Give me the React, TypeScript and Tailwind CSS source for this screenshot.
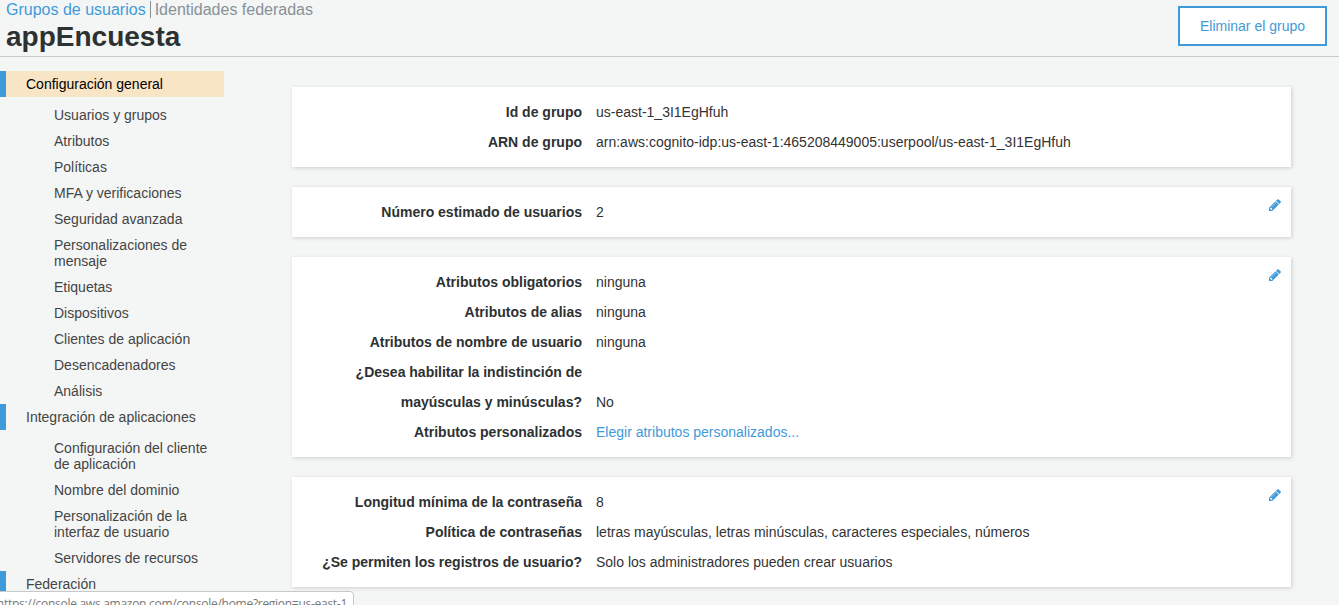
type NavGroup = { title: string; active?: boolean; items: string[] };
type Row = { label: string; value: string; link?: boolean };

const NAV: NavGroup[] = [
  {
    title: "Configuración general",
    active: true,
    items: [
      "Usuarios y grupos",
      "Atributos",
      "Políticas",
      "MFA y verificaciones",
      "Seguridad avanzada",
      "Personalizaciones de mensaje",
      "Etiquetas",
      "Dispositivos",
      "Clientes de aplicación",
      "Desencadenadores",
      "Análisis",
    ],
  },
  {
    title: "Integración de aplicaciones",
    items: [
      "Configuración del cliente de aplicación",
      "Nombre del dominio",
      "Personalización de la interfaz de usuario",
      "Servidores de recursos",
    ],
  },
  { title: "Federación", items: [] },
];

const CARDS: { editable: boolean; rows: Row[] }[] = [
  {
    editable: false,
    rows: [
      { label: "Id de grupo", value: "us-east-1_3I1EgHfuh" },
      { label: "ARN de grupo", value: "arn:aws:cognito-idp:us-east-1:465208449005:userpool/us-east-1_3I1EgHfuh" },
    ],
  },
  { editable: true, rows: [{ label: "Número estimado de usuarios", value: "2" }] },
  {
    editable: true,
    rows: [
      { label: "Atributos obligatorios", value: "ninguna" },
      { label: "Atributos de alias", value: "ninguna" },
      { label: "Atributos de nombre de usuario", value: "ninguna" },
      { label: "¿Desea habilitar la indistinción de mayúsculas y minúsculas?", value: "No" },
      { label: "Atributos personalizados", value: "Elegir atributos personalizados...", link: true },
    ],
  },
  {
    editable: true,
    rows: [
      { label: "Longitud mínima de la contraseña", value: "8" },
      { label: "Política de contraseñas", value: "letras mayúsculas, letras minúsculas, caracteres especiales, números" },
      { label: "¿Se permiten los registros de usuario?", value: "Solo los administradores pueden crear usuarios" },
    ],
  },
];

function Pencil() {
  return (
    <svg viewBox="0 0 1792 1792" className="size-3.5 fill-[#3f9ad9]" aria-hidden="true">
      <path d="M491 1536l91-91-235-235-91 91v107h128v128h107zm523-928q0-22-22-22-10 0-17 7l-542 542q-7 7-7 17 0 22 22 22 10 0 17-7l542-542q7-7 7-17zm-54-192l416 416-832 832h-416v-416zm683 96q0 53-37 90l-166 166-416-416 166-165q36-38 90-38 53 0 91 38l235 234q37 39 37 91z" />
    </svg>
  );
}

function Header() {
  return (
    <header className="flex h-[57px] shrink-0 items-start justify-between border-b border-[#c8cacb] pr-3 pl-1.5">
      <div>
        <div className="flex h-[19px] items-center text-[16px] leading-[19px]">
          <a href="#" className="text-[#3f9ad9]">Grupos de usuarios</a>
          <span className="mr-[4px] ml-[4px] h-[17px] w-px bg-[#879196]" />
          <a href="#" className="text-[#879196]">Identidades federadas</a>
        </div>
        <h1 className="text-[28px] leading-[36px] font-bold text-[#2d3132]">appEncuesta</h1>
      </div>
      <button className="mt-1.5 h-10 w-[149px] border-2 border-[#3f9ad9] bg-white text-[14px] text-[#3f9ad9]">
        Eliminar el grupo
      </button>
    </header>
  );
}

function Sidebar() {
  return (
    <nav className="w-56 shrink-0 pt-3.5 text-[14px] leading-4 text-[#444]">
      {NAV.map((g) => (
        <div key={g.title}>
          <div
            className={
              g.active
                ? "border-l-6 border-[#3f9ad9] bg-[#f8e5c6] py-[5px] pl-5 text-black"
                : "border-l-6 border-[#3f9ad9] py-[5px] pl-5"
            }
          >
            {g.title}
          </div>
          <ul className="pt-[5px]">
            {g.items.map((t) => (
              <li key={t} className="py-[5px] pr-3 pl-[54px]">{t}</li>
            ))}
          </ul>
        </div>
      ))}
    </nav>
  );
}

export default function App() {
  return (
    <div className="relative flex h-[605px] w-[1339px] flex-col overflow-hidden bg-[#f4f6f6] font-['Liberation_Sans',Arial,sans-serif]">
      <Header />
      <div className="flex min-h-0 flex-1">
        <Sidebar />
        <main className="ml-[68px] flex w-[999px] flex-col gap-5 pt-[30px]">
          {CARDS.map((c, i) => (
            <section
              key={i}
              className="flex shrink-0 justify-between bg-white py-2.5 pr-[9px] shadow-[1px_1px_4px_rgba(0,0,0,0.16)]"
            >
              <div className="text-[14px] leading-[30px] text-[#333]">
                {c.rows.map((r) => (
                  <div key={r.label} className="flex items-end gap-3.5">
                    <div className="w-[290px] pl-5 text-right font-bold text-[#2d3132]">{r.label}</div>
                    <div className={r.link ? "text-[#3f9ad9]" : ""}>{r.value}</div>
                  </div>
                ))}
              </div>
              {c.editable && (
                <button className="mt-[1px] h-3.5" aria-label="Editar">
                  <Pencil />
                </button>
              )}
            </section>
          ))}
        </main>
      </div>
      <div className="absolute top-[591px] left-[-1px] h-5 w-[355px] overflow-hidden rounded-tr-[4px] border border-[#c6c8c9] bg-white">
        <div className="flex justify-end pr-[6px] font-['Open_Sans','Noto_Sans',sans-serif] text-[12px] leading-[23px] tracking-[-0.28px] whitespace-nowrap text-[#777]">
          https://console.aws.amazon.com/console/home?region=us-east-1
        </div>
      </div>
    </div>
  );
}
